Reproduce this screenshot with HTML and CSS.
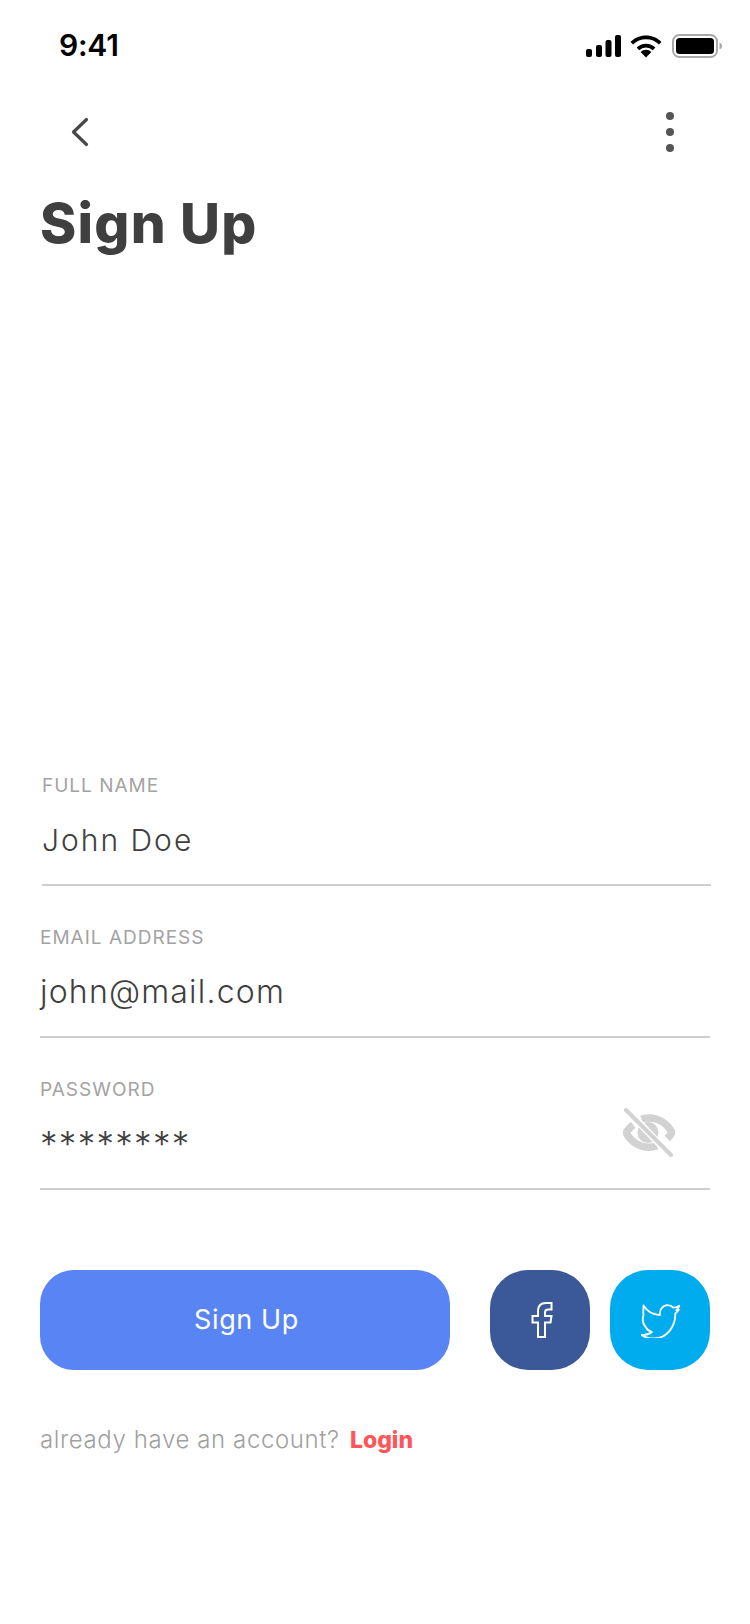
FILE: index.html
```html
<!DOCTYPE html>
<html lang="en">
<head>
<meta charset="utf-8">
<title>Sign Up</title>
<link rel="stylesheet" href="styles.css">
</head>
<body>
<div class="page">
  <div class="status">
    <span class="time">9:41</span>
    <div class="status-icons">
      <svg class="ic-signal" width="35" height="22" viewBox="0 0 35 22"><rect x="0" y="14" width="6" height="8" rx="2"/><rect x="10" y="10" width="6" height="12" rx="2"/><rect x="19.500" y="5" width="6" height="17" rx="2"/><rect x="29" y="0" width="6" height="22" rx="2"/></svg>
      <svg class="ic-wifi" width="32" height="23" viewBox="0 0 32 23"><path d="M16 22.500l-5.400-5.600a7.600 7.600 0 0 1 10.800 0z"/><path d="M16 8.700c3.700 0 7 1.500 9.400 3.900l-2.600 2.700a9.700 9.700 0 0 0-13.600 0l-2.600-2.700A13.300 13.300 0 0 1 16 8.700z"/><path d="M16 .5c6 0 11.500 2.400 15.500 6.400l-2.600 2.700A18.300 18.300 0 0 0 16 4.200 18.300 18.300 0 0 0 3.100 9.600L.5 6.900C4.500 2.900 10 .5 16 .5z"/></svg>
      <svg class="ic-battery" width="50" height="24" viewBox="0 0 50 24"><rect x="1" y="1" width="44" height="22" rx="6.500" fill="none" stroke="#a9a9a9" stroke-width="2"/><rect x="4" y="4" width="38" height="16" rx="3.500" fill="#000"/><path d="M47.500 8.500c1.500.5 2.500 2 2.500 3.500s-1 3-2.500 3.500z" fill="#a9a9a9"/></svg>
    </div>
  </div>
  <div class="nav">
    <svg class="ic-back" width="20" height="30" viewBox="0 0 20 30"><path d="M16.500 2.500L3.500 15l13 12.500" fill="none" stroke="#484848" stroke-width="3.200" stroke-linecap="round" stroke-linejoin="round"/></svg>
    <div class="dots"><i></i><i></i><i></i></div>
  </div>
  <h1 class="title">Sign Up</h1>
  <form class="form">
    <div class="field field-first">
      <div class="label">FULL NAME</div>
      <div class="value">John Doe</div>
    </div>
    <div class="field">
      <div class="label">EMAIL ADDRESS</div>
      <div class="value email">john@mail.com</div>
    </div>
    <div class="field">
      <div class="label">PASSWORD</div>
      <div class="value pass-row">
        <span class="stars">********</span>
        <svg class="ic-eye" width="52" height="50" viewBox="0 0 52 50"><path d="M18.500 11c2-.6 4.700-1 7.500-1 10 0 18.500 6 23 14.500-1.400 2.200-3 4.200-4.800 6" fill="none" stroke="#d2d2d2" stroke-width="7.500" stroke-linejoin="round"/><path d="M34 38c-2.500.8-5 1.200-8 1.200-10 0-18.500-6-23-14.500 2-3.100 4.400-5.800 7.200-8" fill="none" stroke="#d2d2d2" stroke-width="7.500" stroke-linejoin="round"/><circle cx="25" cy="24.500" r="10.500" fill="#d2d2d2"/><path d="M3 1l45 47" fill="none" stroke="#fff" stroke-width="7"/><path d="M3 2l45 45" fill="none" stroke="#d2d2d2" stroke-width="4" stroke-linecap="round"/></svg>
      </div>
    </div>
    <div class="actions">
      <button class="btn primary" type="button">Sign Up</button>
      <button class="btn social fb" type="button" aria-label="Facebook">
        <svg width="22" height="36" viewBox="0 0 22 36"><path d="M7 35V20.500H1.500v-6.500H7V9C7 4 10 1 15 1h5.500v6.500H17c-2 0-3 1-3 3V14h6.500l-1 6.500H14V35z" fill="none" stroke="#fff" stroke-width="2"/></svg>
      </button>
      <button class="btn social tw" type="button" aria-label="Twitter">
        <svg width="42" height="36" viewBox="0 0 42 36"><path d="M2.500 3.500c3 5 8 9 16.500 9.700-.8-5 2.500-10 7.500-10 2.500 0 4.500 1 5.800 2.500 2 0 3.700-.7 6-2-.6 2-1.800 3.500-3 4.500l2.500-.7c-1 1.800-2 3-3.500 4 .4 11-7 25-21.500 25-4.500 0-8.500-1-12.300-3.500 4 .2 7.300-.6 10.500-3-3.300-1-5.300-3-6-4.500-2.700-3-4-8-2.500-12.500-.5-3 0-6 0-9z" fill="none" stroke="#fff" stroke-width="1.800" stroke-linejoin="round"/></svg>
      </button>
    </div>
    <p class="foot">already have an account? <a class="login">Login</a></p>
  </form>
</div>
</body>
</html>
```
FILE: styles.css
```css
* { box-sizing: border-box; }
html, body { margin: 0; padding: 0; background: #fff; }
.page {
  width: 750px;
  height: 1624px;
  overflow: hidden;
  display: flex;
  flex-direction: column;
  font-family: "Inter", "Liberation Sans", sans-serif;
  color: #3f3f3f;
}
.status {
  height: 90px;
  padding: 28px 28px 0 59px;
  display: flex;
  justify-content: space-between;
  align-items: flex-start;
}
.time {
  font: 600 30px/34px "Inter", sans-serif;
  letter-spacing: -.2px;
  color: #000;
}
.status-icons {
  display: flex;
  align-items: center;
  gap: 9px;
  margin-top: 6px;
}
.ic-signal, .ic-wifi { fill: #000; }
.ic-battery { margin-left: 1px; }
.nav {
  height: 84px;
  padding-left: 70px;
  display: flex;
  justify-content: space-between;
  align-items: center;
}
.dots {
  display: flex;
  flex-direction: column;
  gap: 8px;
  margin-right: 76px;
}
.dots i {
  width: 8px;
  height: 8px;
  border-radius: 50%;
  background: #555;
}
.title {
  margin: 13px 0 0 40px;
  font: 800 55px/72px "Inter", sans-serif;
  letter-spacing: 1.200px;
  color: #3f3f3f;
}
.form {
  margin-top: 515px;
  padding: 0 40px;
  display: flex;
  flex-direction: column;
}
.field {
  height: 152px;
  padding-top: 41px;
  border-bottom: 2px solid #cfcfcf;
}
.field-first {
  height: 112px;
  padding-top: 1px;
  margin-left: 2px;
  margin-right: -1px;
}
.label {
  font-size: 19px;
  line-height: 22px;
  letter-spacing: 1px;
  color: #a3a3a3;
}
.value {
  margin-top: 25px;
  font-size: 30px;
  line-height: 36px;
  letter-spacing: 2px;
  font-weight: 300;
  color: #3f3f3f;
}
.email { font-size: 32px; letter-spacing: 1.200px; }
.pass-row {
  display: flex;
  justify-content: space-between;
  align-items: flex-start;
  padding-right: 35px;
  margin-top: 7px;
}
.stars {
  margin-top: 18px;
  font-size: 35px;
  letter-spacing: 1.300px;
}
.actions {
  margin-top: 80px;
  display: flex;
  gap: 20px;
}
.btn {
  height: 100px;
  border: 0;
  color: #fff;
  font: 400 27px/34px "Inter", sans-serif;
  display: flex;
  align-items: center;
  justify-content: center;
  padding: 0;
}
.primary {
  width: 410px;
  padding-left: 3px;
  border-radius: 34px;
  background: #5885f3;
  margin-right: 20px;
  letter-spacing: .6px;
}
.social { width: 100px; border-radius: 38px; }
.social svg { margin-left: 3px; }
.fb { background: #3b5998; }
.tw { background: #00acee; }
.foot {
  margin: 56px 0 0;
  font-size: 24px;
  line-height: 28px;
  font-weight: 300;
  letter-spacing: .6px;
  color: #9f9f9f;
}
.login {
  margin-left: 3px;
  font-size: 23px;
  font-weight: 800;
  letter-spacing: 0;
  color: #ff5558;
}
```
